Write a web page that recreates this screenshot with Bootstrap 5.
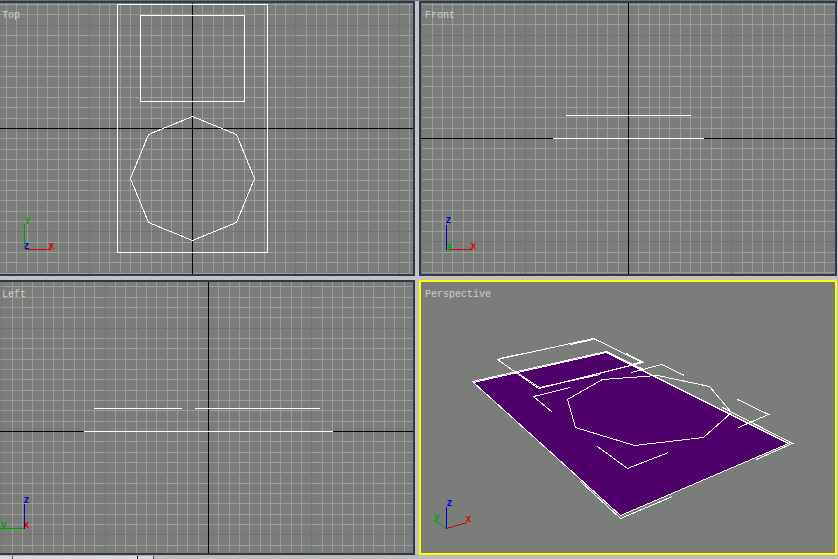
<!DOCTYPE html>
<html lang="en">
<head>
<meta charset="utf-8">
<meta name="viewport" content="width=device-width, initial-scale=1">
<title>Viewports</title>
<link href="https://cdn.jsdelivr.net/npm/bootstrap@5.3.0/dist/css/bootstrap.min.css" rel="stylesheet">
<style>
  body { background: #c3c3c5; font-family: "Liberation Mono", monospace; }
  .workspace { border-top: 1px solid #64736e; }
  .views {
    display: grid;
    grid-template-columns: minmax(0, 415fr) minmax(0, 418fr);
    grid-template-rows: repeat(2, minmax(0, 1fr));
    gap: 4px;
    padding-right: 1px;
  }
  .view { border: 2px solid #30394a; background: #7b7d7a; }
  .view-flush { border-left: 0; }
  .view-active { border-color: #ffff00; }
  .view-title {
    position: absolute; top: 7px; left: 4px;
    font-size: 10px; line-height: 12px; font-weight: 400; color: #cececc;
  }
  .view-flush .view-title { left: 2px; }
  svg { shape-rendering: crispEdges; fill: none; stroke-width: 1; }
  svg text { font-size: 10px; font-weight: 700; stroke: none; }
  .grid-minor { stroke: #9c9d9b; }
  .grid-major { stroke: #727471; }
  .axis { stroke: #000; }
  .wire { stroke: #fff; }
  .gx { stroke: #d80000; } .gy { stroke: #00a400; } .gz { stroke: #0000d0; }
  text.tx { fill: #e00000; } text.ty { fill: #00a400; } text.tz { fill: #0000d0; }
  .strip { height: 4px; background: #bdbdbd; border-top: 1px solid #b4b4b8; }
  .strip-cell { background: #d9d9dc; border-right: 1px solid #505050; }
  .strip-a { width: 13px; } .strip-b { width: 125px; border-color: #000; } .strip-c { width: 16px; }
</style>
<script src="https://cdn.jsdelivr.net/npm/bootstrap@5.3.0/dist/js/bootstrap.bundle.min.js"></script>
</head>
<body>
<main class="workspace vh-100 d-flex flex-column overflow-hidden">
  <div class="views flex-grow-1">
    <section class="view view-flush position-relative overflow-hidden">
      <h2 class="view-title m-0">Top</h2>
      <svg class="d-block w-100 h-100" viewBox="-0.5 2.5 413 271" preserveAspectRatio="xMidYMid slice" data-axis="192 128" role="img" aria-label="Top view">
        <g class="wire">
          <path d="M117 4H267V252H117Z"/>
          <path d="M140 15H244V101H140Z"/>
          <path d="M192 116L236 134L254 178L236 222L192 240L148 222L130 178L148 134Z"/>
        </g>
        <text class="tz" x="23" y="248">z</text>
        <path class="gx" d="M25 249H50"/><path class="gy" d="M24 223V249"/>
        <text class="ty" x="24" y="223">Y</text><text class="tx" x="48" y="248">x</text>
      </svg>
    </section>
    <section class="view position-relative overflow-hidden">
      <h2 class="view-title m-0">Front</h2>
      <svg class="d-block w-100 h-100" viewBox="420.5 2.5 414 271" preserveAspectRatio="xMidYMid slice" data-axis="628 138" role="img" aria-label="Front view">
        <path class="wire" d="M565 115H690M552 138H703"/>
        <path class="gx" d="M447 249H472"/><path class="gz" d="M446 224V249"/>
        <text class="ty" x="446" y="248">y</text><text class="tz" x="445" y="222">z</text><text class="tx" x="470" y="248">x</text>
      </svg>
    </section>
    <section class="view view-flush position-relative overflow-hidden">
      <h2 class="view-title m-0">Left</h2>
      <svg class="d-block w-100 h-100" viewBox="-0.5 281.5 413 271" preserveAspectRatio="xMidYMid slice" data-axis="208 431" role="img" aria-label="Left view">
        <path class="wire" d="M93 408H181M194 408H319M83 431H332"/>
        <path class="gy" d="M-1 528H24"/><path class="gz" d="M24 503V528"/>
        <text class="ty" x="0" y="527">y</text><text class="tz" x="23" y="502">z</text><text class="tx" x="23" y="527">x</text>
      </svg>
    </section>
    <section class="view view-active position-relative overflow-hidden">
      <h2 class="view-title m-0">Perspective</h2>
      <svg class="d-block w-100 h-100" viewBox="420.5 281.5 414 271" preserveAspectRatio="xMidYMid slice" role="img" aria-label="Perspective view">
        <path fill="#50006a" d="M473 382L606 352L788 443L620 515Z"/>
        <g class="wire">
          <path d="M473 382L606 352L788 443L620 515Z"/>
          <path d="M472 381L606 351L643 369M580 481L620 518L672 496M722 407L792 443L756 459"/>
          <path d="M497 359L593 338L642 362L538 388Z"/>
          <path d="M499 358L523 353M570 344L593 339M626 353L641 361L628 365M515 371L539 387L600 374"/>
          <path d="M602 379L657 375L709 386L731 412L703 437L634 445L575 427L567 399Z"/>
          <path d="M570 387L533 396L552 412M631 372L661 364L684 375M737 399L768 414L738 427M597 446L627 468L668 452"/>
        </g>
        <path class="gx" d="M446 528L467 522"/><path class="gy" d="M446 528L434 520"/><path class="gz" d="M446 506V528"/>
        <text class="ty" x="433" y="519">y</text><text class="tz" x="446" y="505">z</text><text class="tx" x="465" y="521">x</text>
      </svg>
    </section>
  </div>
  <footer class="strip d-flex flex-shrink-0">
    <div class="strip-cell strip-a"></div><div class="strip-cell strip-b"></div><div class="strip-cell strip-c"></div>
  </footer>
</main>
<script>
  // Home grid: 31 units hold three cells; every tenth line is a major one.
  document.querySelectorAll('svg[data-axis]').forEach(function (svg) {
    var axis = svg.dataset.axis.split(' ').map(Number);
    var box = svg.viewBox.baseVal;
    var right = box.x + box.width, bottom = box.y + box.height;
    var paths = { 'grid-minor': '', 'grid-major': '', 'axis': '' };
    for (var k = -60; k <= 60; k++) {
      var kind = k === 0 ? 'axis' : k % 10 === 0 ? 'grid-major' : 'grid-minor';
      var step = Math.round(k * 31 / 3);
      var x = axis[0] + step, y = axis[1] + step;
      if (x > box.x && x < right) paths[kind] += 'M' + x + ' ' + box.y + 'V' + bottom;
      if (y > box.y && y < bottom) paths[kind] += 'M' + box.x + ' ' + y + 'H' + right;
    }
    ['axis', 'grid-major', 'grid-minor'].forEach(function (name) {
      var p = document.createElementNS('http://www.w3.org/2000/svg', 'path');
      p.setAttribute('class', name);
      p.setAttribute('d', paths[name]);
      svg.insertBefore(p, svg.querySelector('.grid-major') || svg.querySelector('.axis') || svg.firstChild);
    });
  });
</script>
</body>
</html>
